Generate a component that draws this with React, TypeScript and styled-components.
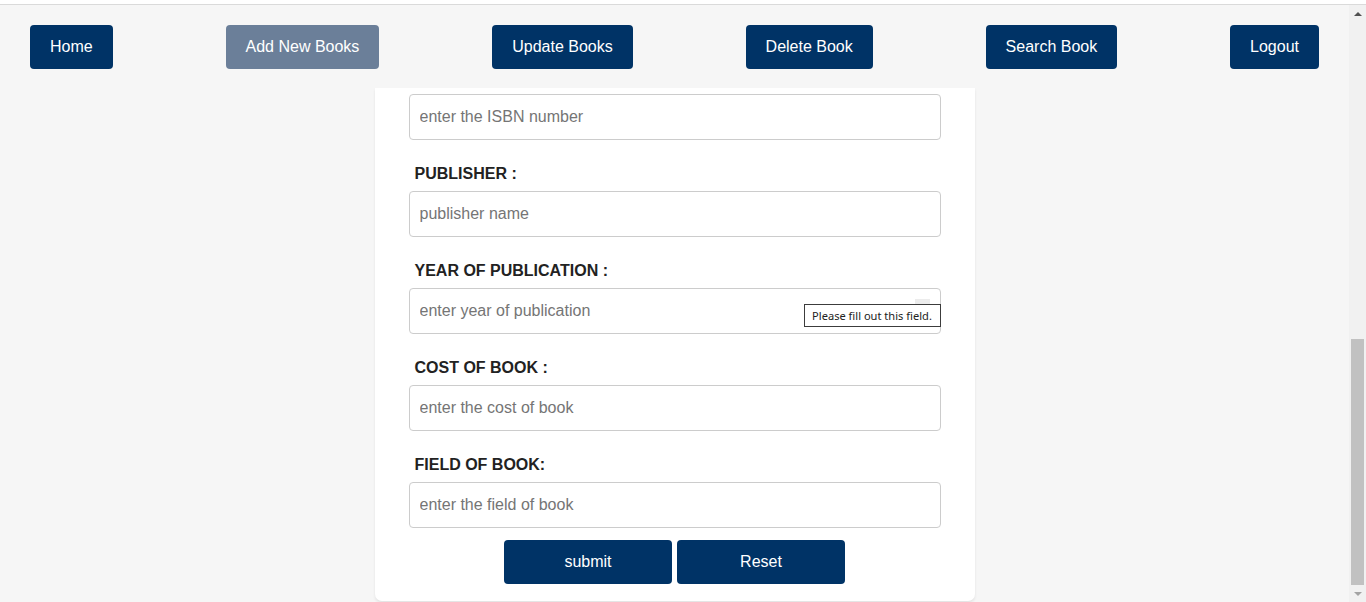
import * as React from 'react'
import styled, { createGlobalStyle } from 'styled-components'

const navy = '#003366'

const GlobalStyle = createGlobalStyle`
  html, body {
    margin: 0;
    padding: 0;
    height: 100%;
    overflow: hidden;
    font-family: 'Liberation Sans', Arial, sans-serif;
  }
  #root {
    height: 100%;
  }
  * {
    box-sizing: border-box;
  }
`

const links = [
  { label: 'Home' },
  { label: 'Add New Books', active: true },
  { label: 'Update Books' },
  { label: 'Delete Book' },
  { label: 'Search Book' },
  { label: 'Logout' },
]

type Field = {
  label?: string
  placeholder: string
  tooltip?: boolean
}

const fields: Field[] = [
  { placeholder: 'enter the ISBN number' },
  { label: 'PUBLISHER :', placeholder: 'publisher name' },
  { label: 'YEAR OF PUBLICATION :', placeholder: 'enter year of publication', tooltip: true },
  { label: 'COST OF BOOK :', placeholder: 'enter the cost of book' },
  { label: 'FIELD OF BOOK:', placeholder: 'enter the field of book' },
]

export default function App() {
  return (
    <>
      <GlobalStyle />
      <Frame>
        <TopEdge />
        <Body>
          <Main>
            <Nav>
              {links.map(link => (
                <NavButton key={link.label} $active={link.active}>
                  {link.label}
                </NavButton>
              ))}
            </Nav>
            <Card>
              {fields.map(field => (
                <FieldGroup key={field.placeholder}>
                  {field.label && <Label>{field.label}</Label>}
                  <InputWrap>
                    <Input placeholder={field.placeholder} />
                    {field.tooltip && (
                      <>
                        <SpinHover />
                        <Tooltip>Please fill out this field.</Tooltip>
                      </>
                    )}
                  </InputWrap>
                </FieldGroup>
              ))}
              <Actions>
                <ActionButton type="button">submit</ActionButton>
                <ActionButton type="button">Reset</ActionButton>
              </Actions>
            </Card>
          </Main>
          <Scrollbar>
            <ScrollButton>
              <Arrow $up />
            </ScrollButton>
            <Track>
              <Thumb />
            </Track>
            <ScrollButton>
              <Arrow />
            </ScrollButton>
          </Scrollbar>
        </Body>
      </Frame>
    </>
  )
}

const Frame = styled.div`
  display: flex;
  flex-direction: column;
  height: 100vh;
  background: #fff;
`

const TopEdge = styled.div`
  height: 5px;
  flex: none;
  border-bottom: 1px solid #dadada;
  background: #fff;
`

const Body = styled.div`
  flex: 1;
  display: flex;
  min-height: 0;
`

const Main = styled.div`
  flex: 1;
  display: flex;
  flex-direction: column;
  background: #f6f6f6;
  overflow: hidden;
`

const Nav = styled.nav`
  height: 83px;
  flex: none;
  display: flex;
  align-items: center;
  justify-content: space-between;
  padding: 0 30px;
  background: #f6f6f6;
`

const NavButton = styled.a<{ $active?: boolean }>`
  display: flex;
  align-items: center;
  height: 44px;
  padding: 0 20px;
  border-radius: 4px;
  background: ${p => (p.$active ? '#6b7f99' : navy)};
  color: #fff;
  font-size: 16px;
  cursor: pointer;
`

const Card = styled.form`
  flex: none;
  width: 600px;
  margin: 0 auto;
  padding: 6px 34px 17px;
  background: #fff;
  border-radius: 0 0 7px 7px;
  box-shadow: 0 2px 3px rgba(0, 0, 0, 0.08);
`

const FieldGroup = styled.div`
  display: flex;
  flex-direction: column;
`

const Label = styled.label`
  display: block;
  margin: 25px 0 8px 6px;
  line-height: 18px;
  font-size: 16px;
  font-weight: bold;
  color: #222;
`

const InputWrap = styled.div`
  position: relative;
`

const Input = styled.input`
  display: block;
  width: 100%;
  height: 46px;
  padding: 0 10px;
  border: 1px solid #ccc;
  border-radius: 4px;
  font-family: 'Liberation Sans', Arial, sans-serif;
  font-size: 16px;
  color: #222;
  outline: none;

  &::placeholder {
    color: #757575;
  }
`

const SpinHover = styled.div`
  position: absolute;
  left: 506px;
  top: 11px;
  width: 15px;
  height: 24px;
  background: #ececec;
`

const Tooltip = styled.div`
  position: absolute;
  right: 0;
  top: 16px;
  width: 137px;
  height: 23px;
  display: flex;
  align-items: center;
  justify-content: center;
  background: #fff;
  border: 1px solid #3c3c3c;
  font-family: 'Noto Sans', 'Open Sans', sans-serif;
  font-size: 11.1px;
  color: #222;
  white-space: nowrap;
`

const Actions = styled.div`
  display: flex;
  justify-content: center;
  gap: 5px;
  margin-top: 12px;
`

const ActionButton = styled.button`
  width: 168px;
  height: 44px;
  border: none;
  border-radius: 4px;
  background: ${navy};
  color: #fff;
  font-family: 'Liberation Sans', Arial, sans-serif;
  font-size: 16px;
  cursor: pointer;
`

const Scrollbar = styled.div`
  width: 17px;
  flex: none;
  display: flex;
  flex-direction: column;
  background: #f1f1f1;
`

const ScrollButton = styled.div`
  height: 17px;
  flex: none;
  display: flex;
  align-items: center;
  justify-content: center;
`

const Arrow = styled.div<{ $up?: boolean }>`
  width: 0;
  height: 0;
  border-left: 4px solid transparent;
  border-right: 4px solid transparent;
  ${p =>
    p.$up
      ? `border-bottom: 4px solid #505050;`
      : `border-top: 4px solid #a3a3a3;`}
`

const Track = styled.div`
  flex: 1;
  display: flex;
  flex-direction: column;
  justify-content: flex-end;
  padding: 0 2px;
`

const Thumb = styled.div`
  height: 246px;
  background: #c1c1c1;
`
